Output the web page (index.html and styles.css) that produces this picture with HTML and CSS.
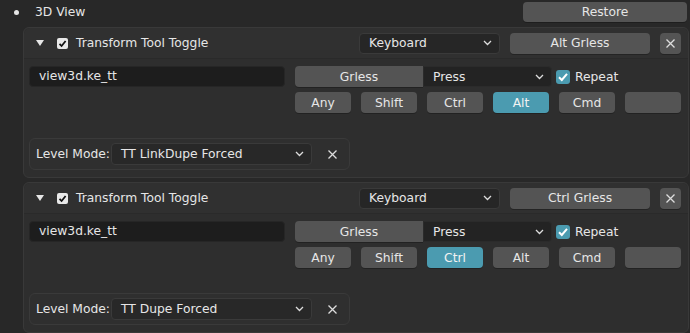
FILE: index.html
```html
<!DOCTYPE html>
<html lang="en">
  <head>
    <meta charset="UTF-8" />
    <meta name="viewport" content="width=device-width, initial-scale=1.0" />
    <title>Keymap - 3D View</title>
    <link rel="stylesheet" href="styles.css">
  </head>
  <body>
    <div class="top-row">
      <span class="bullet"></span>
      <span class="group-name">3D View</span>
      <button class="btn restore">Restore</button>
    </div>

    <!-- Primer elemento del keymap -->
    <div class="item">
      <div class="item-head">
        <span class="arrow"></span>
        <span class="check white">
          <svg width="11" height="11" viewBox="0 0 11 11"><polyline points="2.5,5.8 4.6,8 8.6,3" fill="none" stroke="#111" stroke-width="1.8"/></svg>
        </span>
        <span class="item-name">Transform Tool Toggle</span>
        <div class="menu type-menu">
          <span>Keyboard</span>
          <svg class="chev" width="9" height="6" viewBox="0 0 9 6"><polyline points="1,1 4.5,4.5 8,1" fill="none" stroke="#ddd" stroke-width="1.3"/></svg>
        </div>
        <button class="btn key-btn">Alt Grless</button>
        <button class="btn icon-btn">
          <svg width="11" height="11" viewBox="0 0 11 11"><path d="M1.5 1.5 L9.5 9.5 M9.5 1.5 L1.5 9.5" stroke="#ddd" stroke-width="1.3"/></svg>
        </button>
      </div>
      <div class="item-body">
        <div class="field">view3d.ke_tt</div>
        <div class="keys">
          <div class="key-row">
            <button class="btn grless">Grless</button>
            <div class="menu press">
              <span>Press</span>
              <svg class="chev" width="9" height="6" viewBox="0 0 9 6"><polyline points="1,1 4.5,4.5 8,1" fill="none" stroke="#ddd" stroke-width="1.3"/></svg>
            </div>
            <span class="check blue">
              <svg width="14" height="14" viewBox="0 0 14 14"><polyline points="3,7.3 5.8,10 11,3.8" fill="none" stroke="#fff" stroke-width="2"/></svg>
            </span>
            <span class="repeat">Repeat</span>
          </div>
          <div class="mods">
            <button class="btn mod">Any</button>
            <button class="btn mod">Shift</button>
            <button class="btn mod">Ctrl</button>
            <button class="btn mod active">Alt</button>
            <button class="btn mod">Cmd</button>
            <button class="btn mod"></button>
          </div>
        </div>
      </div>
      <div class="props">
        <span class="prop-label">Level Mode:</span>
        <div class="menu level">
          <span>TT LinkDupe Forced</span>
          <svg class="chev" width="9" height="6" viewBox="0 0 9 6"><polyline points="1,1 4.5,4.5 8,1" fill="none" stroke="#ddd" stroke-width="1.3"/></svg>
        </div>
        <svg class="x-plain" width="11" height="11" viewBox="0 0 11 11"><path d="M1.5 1.5 L9.5 9.5 M9.5 1.5 L1.5 9.5" stroke="#ddd" stroke-width="1.3"/></svg>
      </div>
    </div>

    <!-- Segundo elemento del keymap -->
    <div class="item">
      <div class="item-head">
        <span class="arrow"></span>
        <span class="check white">
          <svg width="11" height="11" viewBox="0 0 11 11"><polyline points="2.5,5.8 4.6,8 8.6,3" fill="none" stroke="#111" stroke-width="1.8"/></svg>
        </span>
        <span class="item-name">Transform Tool Toggle</span>
        <div class="menu type-menu">
          <span>Keyboard</span>
          <svg class="chev" width="9" height="6" viewBox="0 0 9 6"><polyline points="1,1 4.5,4.5 8,1" fill="none" stroke="#ddd" stroke-width="1.3"/></svg>
        </div>
        <button class="btn key-btn">Ctrl Grless</button>
        <button class="btn icon-btn">
          <svg width="11" height="11" viewBox="0 0 11 11"><path d="M1.5 1.5 L9.5 9.5 M9.5 1.5 L1.5 9.5" stroke="#ddd" stroke-width="1.3"/></svg>
        </button>
      </div>
      <div class="item-body">
        <div class="field">view3d.ke_tt</div>
        <div class="keys">
          <div class="key-row">
            <button class="btn grless">Grless</button>
            <div class="menu press">
              <span>Press</span>
              <svg class="chev" width="9" height="6" viewBox="0 0 9 6"><polyline points="1,1 4.5,4.5 8,1" fill="none" stroke="#ddd" stroke-width="1.3"/></svg>
            </div>
            <span class="check blue">
              <svg width="14" height="14" viewBox="0 0 14 14"><polyline points="3,7.3 5.8,10 11,3.8" fill="none" stroke="#fff" stroke-width="2"/></svg>
            </span>
            <span class="repeat">Repeat</span>
          </div>
          <div class="mods">
            <button class="btn mod">Any</button>
            <button class="btn mod">Shift</button>
            <button class="btn mod active">Ctrl</button>
            <button class="btn mod">Alt</button>
            <button class="btn mod">Cmd</button>
            <button class="btn mod"></button>
          </div>
        </div>
      </div>
      <div class="props">
        <span class="prop-label">Level Mode:</span>
        <div class="menu level">
          <span>TT Dupe Forced</span>
          <svg class="chev" width="9" height="6" viewBox="0 0 9 6"><polyline points="1,1 4.5,4.5 8,1" fill="none" stroke="#ddd" stroke-width="1.3"/></svg>
        </div>
        <svg class="x-plain" width="11" height="11" viewBox="0 0 11 11"><path d="M1.5 1.5 L9.5 9.5 M9.5 1.5 L1.5 9.5" stroke="#ddd" stroke-width="1.3"/></svg>
      </div>
    </div>
  </body>
</html>
```

FILE: styles.css
```css
body {
  font-family: "DejaVu Sans", sans-serif;
  font-size: 12.3px;
  margin: 0;
  padding: 0;
  background-color: #282828;
  color: #e6e6e6;
  overflow: hidden;
}

.top-row {
  display: flex;
  align-items: center;
  height: 24px;
  padding-right: 3px;
  margin-bottom: 3px;
}

.bullet {
  width: 5px;
  height: 5px;
  border-radius: 50%;
  background: #e6e6e6;
  margin-left: 14px;
}

.group-name {
  margin-left: 16px;
  flex: 1;
}

.btn {
  font-family: inherit;
  font-size: 12.3px;
  color: #e6e6e6;
  background-color: #545454;
  border: none;
  border-radius: 4px;
  height: 21px;
  padding: 0;
  box-shadow: 0 1px 0 rgba(0, 0, 0, 0.25);
  white-space: nowrap;
}

.restore {
  width: 164px;
  height: 20px;
}

.item {
  margin: 0 1px 4px 23px;
  background-color: #2e2e2e;
  border: 1px solid #393939;
  border-radius: 6px;
  padding-bottom: 7px;
}

.item-head {
  display: flex;
  align-items: center;
  height: 30px;
  padding: 0 7px 0 12px;
  background-color: #303030;
  border-bottom: 1px solid #2a2a2a;
  border-radius: 6px 6px 0 0;
}

.arrow {
  width: 0;
  height: 0;
  border-left: 4px solid transparent;
  border-right: 4px solid transparent;
  border-top: 6px solid #e6e6e6;
}

.check {
  display: flex;
  align-items: center;
  justify-content: center;
  border-radius: 2px;
}

.check.white {
  width: 11px;
  height: 11px;
  background: #e8e8e8;
  margin-left: 13px;
}

.item-name {
  margin-left: 8px;
  flex: 1;
  white-space: nowrap;
}

.menu {
  display: flex;
  align-items: center;
  justify-content: space-between;
  height: 21px;
  padding: 0 7px 0 9px;
  box-sizing: border-box;
  background-color: #262626;
  border: 1px solid #3a3a3a;
  border-radius: 4px;
  white-space: nowrap;
}

.type-menu {
  width: 141px;
}

.key-btn {
  width: 140px;
  margin-left: 10px;
}

.icon-btn {
  width: 21px;
  margin-left: 10px;
  display: flex;
  align-items: center;
  justify-content: center;
}

.item-body {
  display: flex;
  gap: 10px;
  padding: 7px 7px 0 5px;
}

.field {
  width: 256px;
  height: 21px;
  box-sizing: border-box;
  padding-left: 9px;
  line-height: 19px;
  background-color: #1d1d1d;
  border: 1px solid #262626;
  border-radius: 4px;
}

.keys {
  display: flex;
  flex-direction: column;
  gap: 5px;
  width: 386px;
}

.key-row {
  display: flex;
  align-items: center;
}

.grless {
  width: 128px;
  border-radius: 4px 0 0 4px;
}

.press {
  width: 129px;
  background-color: #232323;
  border-color: #2b2b2b;
  border-radius: 0 4px 4px 0;
}

.check.blue {
  width: 14px;
  height: 14px;
  background: #4b9bb0;
  margin-left: 4px;
  border-radius: 3px;
}

.repeat {
  margin-left: 5px;
}

.mods {
  display: flex;
  gap: 10px;
}

.mod {
  width: 56px;
}

.mod.active {
  background-color: #4b9bb0;
  color: #f2f2f2;
}

.props {
  display: flex;
  align-items: center;
  width: 321px;
  height: 32px;
  box-sizing: border-box;
  margin: 25px 0 0 5px;
  padding: 0 11px 0 6px;
  border: 1px solid #3a3a3a;
  border-radius: 6px;
  background-color: #2f2f2f;
}

.prop-label {
  white-space: nowrap;
  flex-shrink: 0;
}

.level {
  flex: 1;
  min-width: 0;
  height: 22px;
  margin-left: 1px;
  background-color: #282828;
}

.x-plain {
  flex-shrink: 0;
  margin-left: 15px;
}
```
